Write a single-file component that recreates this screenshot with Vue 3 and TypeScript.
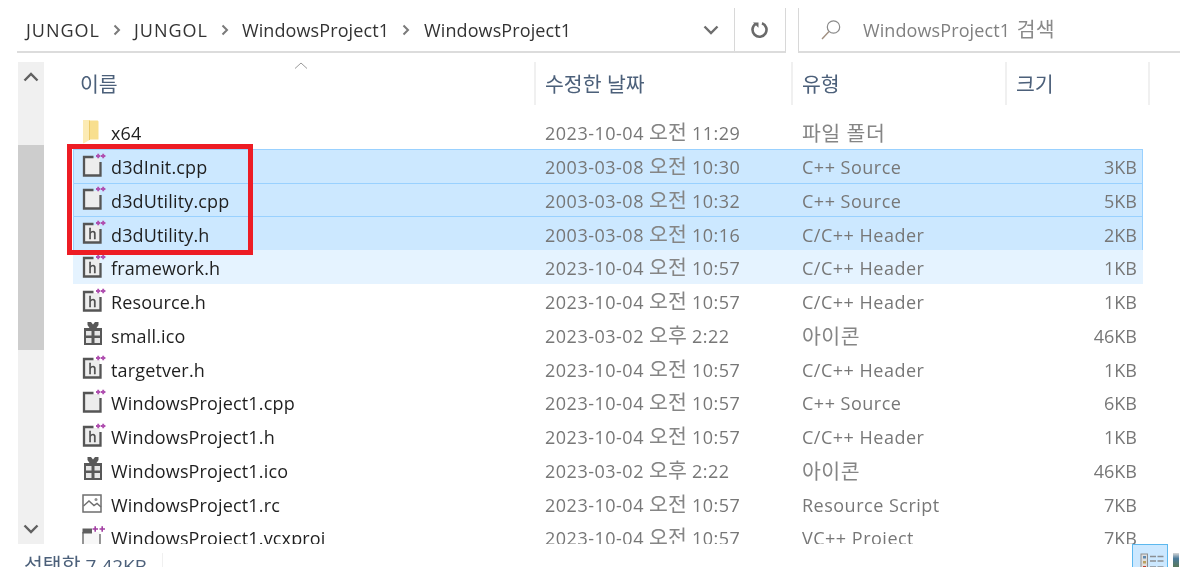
<script setup lang="ts">
type Kind = "folder" | "cpp" | "h" | "ico" | "rc" | "proj";

interface FileRow {
	name: string;
	day: string;
	ampm: string;
	time: string;
	type: string;
	size: string;
	kind: Kind;
	state?: "selected" | "hover";
}

const crumbs = ["JUNGOL", "JUNGOL", "WindowsProject1", "WindowsProject1"];

const row = (
	name: string,
	date: string,
	type: string,
	size: string,
	kind: Kind,
	state?: "selected" | "hover",
): FileRow => {
	const [day, ampm, time] = date.split(" ");
	return { name, day, ampm, time, type, size, kind, state };
};

const files: FileRow[] = [
	row("x64", "2023-10-04 오전 11:29", "파일 폴더", "", "folder"),
	row("d3dInit.cpp", "2003-03-08 오전 10:30", "C++ Source", "3KB", "cpp", "selected"),
	row("d3dUtility.cpp", "2003-03-08 오전 10:32", "C++ Source", "5KB", "cpp", "selected"),
	row("d3dUtility.h", "2003-03-08 오전 10:16", "C/C++ Header", "2KB", "h", "selected"),
	row("framework.h", "2023-10-04 오전 10:57", "C/C++ Header", "1KB", "h", "hover"),
	row("Resource.h", "2023-10-04 오전 10:57", "C/C++ Header", "1KB", "h"),
	row("small.ico", "2023-03-02 오후 2:22", "아이콘", "46KB", "ico"),
	row("targetver.h", "2023-10-04 오전 10:57", "C/C++ Header", "1KB", "h"),
	row("WindowsProject1.cpp", "2023-10-04 오전 10:57", "C++ Source", "6KB", "cpp"),
	row("WindowsProject1.h", "2023-10-04 오전 10:57", "C/C++ Header", "1KB", "h"),
	row("WindowsProject1.ico", "2023-03-02 오후 2:22", "아이콘", "46KB", "ico"),
	row("WindowsProject1.rc", "2023-10-04 오전 10:57", "Resource Script", "7KB", "rc"),
	row("WindowsProject1.vcxproj", "2023-10-04 오전 10:57", "VC++ Project", "7KB", "proj"),
];

// 한글이 들어간 유형은 글자가 더 크게 보인다
const isKorean = (text: string) => /[가-힣]/.test(text);
</script>

<template>
	<div class="explorer">
		<div class="toolbar">
			<div class="address">
				<template v-for="(crumb, i) in crumbs" :key="i">
					<span class="crumb" :class="{ wide: crumb === 'JUNGOL' }">{{ crumb }}</span>
					<svg v-if="i < crumbs.length - 1" class="crumb-arrow" width="8" height="12" viewBox="0 0 8 12">
						<path d="M1.5 1.5 6 6l-4.500 4.500" fill="none" stroke="#7a7a7a" stroke-width="2" />
					</svg>
				</template>
				<div class="address-end">
					<svg class="drop" width="16" height="10" viewBox="0 0 16 10">
						<path d="M1.500 1.500 8 8l6.500-6.500" fill="none" stroke="#6e6e6e" stroke-width="2.400" />
					</svg>
					<div class="refresh">
						<svg width="20" height="20" viewBox="0 0 20 20">
							<path d="M5.500 4A7 7 0 1 0 12 3.200" fill="none" stroke="#6a6a6a" stroke-width="2.600" />
							<path d="M3 2.500h5.500v5.200z" fill="#6a6a6a" />
						</svg>
					</div>
				</div>
			</div>
			<div class="search">
				<svg width="22" height="22" viewBox="0 0 22 22">
					<circle cx="13.500" cy="8" r="6.200" fill="none" stroke="#8a8a8a" stroke-width="1.200" />
					<path d="M9 12.500 2 20" fill="none" stroke="#a08f80" stroke-width="1.400" />
				</svg>
				<span>WindowsProject1 <span class="ko search-ko">검색</span></span>
			</div>
		</div>

		<div class="content">
			<div class="scrollbar">
				<svg width="16" height="10" viewBox="0 0 16 10">
					<path d="M1.500 8.500 8 2l6.500 6.500" fill="none" stroke="#606060" stroke-width="2.400" />
				</svg>
				<div class="thumb"></div>
				<svg width="16" height="10" viewBox="0 0 16 10">
					<path d="M1.500 1.500 8 8l6.500-6.500" fill="none" stroke="#606060" stroke-width="2.400" />
				</svg>
			</div>

			<div class="list">
				<div class="header">
					<div class="col col-name">
						이름
						<svg class="sort" width="14" height="7" viewBox="0 0 14 7">
							<path d="M1 6.500 7 1l6 5.500" fill="none" stroke="#9a9a9a" stroke-width="1" />
						</svg>
					</div>
					<div class="col col-date">수정한 날짜</div>
					<div class="col col-type">유형</div>
					<div class="col col-size">크기</div>
				</div>

				<div class="rows">
					<div v-for="file in files" :key="file.name" class="row" :class="file.state">
						<svg class="icon" width="26" height="26" viewBox="0 0 26 26">
							<template v-if="file.kind === 'folder'">
								<path d="M9 1.500h8c1 0 1.500.5 1.500 1.500v17.500H9z" fill="#f8df8e" />
								<path d="M3 1h6.500v20L3.500 24.500 3 24z" fill="#fcebb4" />
								<path d="M9.500 1.500v19.500" stroke="#eccb6a" stroke-width="1" />
							</template>
							<template v-else-if="file.kind === 'ico'">
								<path d="M7.500 1h3.500l2 2.500L15 1h3.500v3L16.500 7h-7L7.500 4z" fill="#585858" />
								<rect x="4" y="7" width="18" height="17" fill="#585858" />
								<path d="M6 10h5.500v4.500H6zM14.500 10H20v4.500h-5.500zM6 17h5.500v5H6zM14.500 17H20v5h-5.500z" fill="#e6e6e6" />
							</template>
							<template v-else-if="file.kind === 'rc'">
								<rect x="3" y="5" width="18" height="17" fill="#fff" stroke="#6e6e6e" stroke-width="1.500" />
								<path d="M3.500 16 9 11l5 4.500 3-2 4 3.500" fill="none" stroke="#6e6e6e" stroke-width="1.400" />
								<circle cx="16" cy="9.500" r="1.500" fill="#8e8e8e" />
							</template>
							<template v-else-if="file.kind === 'proj'">
								<path d="M3 8h17v18H3z" fill="#f7f7f7" />
								<path d="M3 8v18M20 10v16" fill="none" stroke="#6a6a6a" stroke-width="1.400" />
								<path d="M2.500 4.500h9.500v5H2.500z" fill="#5e5e5e" />
							</template>
							<template v-else>
								<path d="M4 5h16v17H4z" fill="#ededed" />
								<path d="M13.500 4H4v18.500h16.500V9" fill="none" stroke="#555555" stroke-width="2.300" />
								<text v-if="file.kind === 'h'" x="8.500" y="19" class="h-mark">h</text>
							</template>
							<path
								v-if="file.kind === 'cpp' || file.kind === 'h'"
								d="M16 3h4.400M18.200 .8v4.400M21 3h4.400M23.200 .8v4.400"
								stroke="#b050b0"
								stroke-width="1.900"
								fill="none"
							/>
							<path
								v-if="file.kind === 'proj'"
								d="M12.500 5h5.500M15.200 2.200v5.600M19.500 5h5.500M22.200 2.200v5.600"
								stroke="#a23ea2"
								stroke-width="1.600"
								fill="none"
							/>
						</svg>
						<span class="name">{{ file.name }}</span>
						<span class="meta">
							{{ file.day }} <span class="ko">{{ file.ampm }}</span> {{ file.time }}
						</span>
						<span class="meta" :class="{ ko: isKorean(file.type) }">{{ file.type }}</span>
						<span class="meta size">{{ file.size }}</span>
					</div>
				</div>
			</div>
		</div>

		<div class="status">
			<span class="status-text"><span class="ko">선택함</span> 7.42KB</span>
			<div class="views">
				<div class="view-details">
					<svg width="26" height="16" viewBox="0 0 26 16">
						<rect x="1" y="1" width="6.500" height="15" fill="#dedede" stroke="#8f8f8f" />
						<rect x="3" y="3" width="3" height="2.500" fill="#5b88b0" />
						<rect x="3" y="8" width="3" height="2.500" fill="#b9a060" />
						<rect x="3" y="13" width="3" height="2.500" fill="#c04030" />
						<path d="M10 3.500h6M17.500 3.500h6M10 8h6M17.500 8h6M10 14h6M17.500 14h6" stroke="#8a8f94" stroke-width="1.500" />
					</svg>
				</div>
				<div class="view-thumb"></div>
			</div>
		</div>

		<div class="marker"></div>
	</div>
</template>

<style>
html,
body {
	margin: 0;
	background: #ffffff;
}
</style>

<style scoped>
.explorer {
	position: relative;
	width: 1200px;
	height: 567px;
	display: flex;
	flex-direction: column;
	overflow: hidden;
	background: #ffffff;
	font-family: "Open Sans", "Noto Sans CJK KR", sans-serif;
	font-size: 18px;
	color: #222222;
	filter: blur(0.35px);
}

.ko {
	font-size: 20.5px;
	letter-spacing: 0;
	line-height: 1;
}

.toolbar {
	height: 53px;
	padding: 8px 20px 0 17px;
	box-sizing: border-box;
	display: flex;
	flex-shrink: 0;
	gap: 12px;
}

.address {
	width: 769px;
	display: flex;
	align-items: center;
	border-bottom: 2px solid #dcdcdc;
	border-right: 1px solid #d8d8d8;
	padding-left: 9px;
	box-sizing: border-box;
}

.crumb {
	color: #333333;
	letter-spacing: 0.1px;
}

.crumb.wide {
	letter-spacing: 1px;
}

.crumb-arrow {
	margin: 0 13px;
}

.crumb-arrow:nth-of-type(3) {
	margin-right: 14px;
}

.address-end {
	margin-left: auto;
	display: flex;
	align-items: center;
	align-self: stretch;
}

.drop {
	margin-right: 15px;
}

.refresh {
	width: 50px;
	align-self: stretch;
	border-left: 1px solid #d8d8d8;
	display: flex;
	align-items: center;
	justify-content: center;
}

.search {
	flex: 1;
	display: flex;
	align-items: center;
	gap: 21px;
	padding-left: 21px;
	border-left: 1px solid #d8d8d8;
	border-bottom: 2px solid #dcdcdc;
	color: #808080;
	letter-spacing: 0.1px;
}

.search-ko {
	margin-left: 2px;
	color: #8a8a8a;
}

.content {
	flex: 1;
	min-height: 0;
	display: flex;
	padding: 9px 0 0 18px;
}

.scrollbar {
	width: 26px;
	background: #f0f0f0;
	display: flex;
	flex-direction: column;
	align-items: center;
	padding-top: 10px;
	padding-bottom: 10px;
	box-sizing: border-box;
}

.thumb {
	align-self: stretch;
	height: 205px;
	margin-top: 63px;
	margin-bottom: auto;
	background: #cdcdcd;
}

.list {
	flex: 1;
	min-width: 0;
	padding-left: 29px;
	overflow: hidden;
}

.header {
	height: 43px;
	width: 1077px;
	display: grid;
	grid-template-columns: 463px 257px 214px 143px;
	color: #4c607a;
	font-size: 20.5px;
}

.col {
	position: relative;
	display: flex;
	align-items: center;
	border-right: 2px solid #f0f0f0;
	box-sizing: border-box;
	padding-left: 9px;
	padding-bottom: 1px;
}

.col-name {
	padding-left: 7px;
}

.sort {
	position: absolute;
	top: 0;
	left: 221px;
}

.rows {
	margin-top: 10px;
}

.row {
	width: 1070px;
	height: 33.75px;
	box-sizing: border-box;
	display: grid;
	grid-template-columns: 38px 434px 257px 1fr auto;
	align-items: center;
	padding-right: 6px;
	padding-top: 2px;
	border: 1px solid transparent;
	border-width: 1px 0 0 0;
}

.row.selected {
	background: #cce8ff;
	border-top-color: #99d1ff;
	box-shadow: inset 1px 0 #99d1ff, inset -1px 0 #99d1ff, 0 1px #99d1ff;
}

.row.hover {
	background: #e5f3ff;
}

.icon {
	margin-left: 7px;
	margin-top: -3px;
}

.name {
	color: #1f1f1f;
	white-space: nowrap;
	letter-spacing: 0.15px;
}

.meta {
	color: #777777;
	white-space: nowrap;
	letter-spacing: 0.5px;
}

.meta .ko,
.meta.ko {
	color: #858585;
}

.size {
	text-align: right;
	letter-spacing: 0;
}

.h-mark {
	font-family: "Liberation Sans", sans-serif;
	font-size: 14px;
	font-weight: 400;
	fill: #484848;
	stroke: #484848;
	stroke-width: 0.4px;
}

.status {
	height: 23px;
	flex-shrink: 0;
	display: flex;
	padding-left: 24px;
	overflow: hidden;
	color: #4c607a;
	font-size: 19px;
}

.status-text {
	width: 139px;
	height: 14px;
	margin-top: 9px;
	line-height: 27px;
	border-right: 1px solid #f0f0f0;
	box-sizing: border-box;
	white-space: nowrap;
}

.views {
	margin-left: auto;
	margin-right: 21px;
	display: flex;
	gap: 5px;
}

.view-details {
	width: 36px;
	height: 24px;
	padding: 8px 0 0 7px;
	background: #cce8ff;
	border: 1px solid #5cb8ee;
	border-bottom: none;
	box-sizing: border-box;
}

.view-details svg {
	display: block;
}

.view-thumb {
	width: 6px;
	height: 14px;
	margin-top: 9px;
	background: linear-gradient(#d8d8d8, #4a7a9a 40%, #5a7a5a);
}

.marker {
	position: absolute;
	left: 67px;
	top: 144px;
	width: 186px;
	height: 111px;
	box-sizing: border-box;
	border: 5px solid #ed1c24;
}
</style>
